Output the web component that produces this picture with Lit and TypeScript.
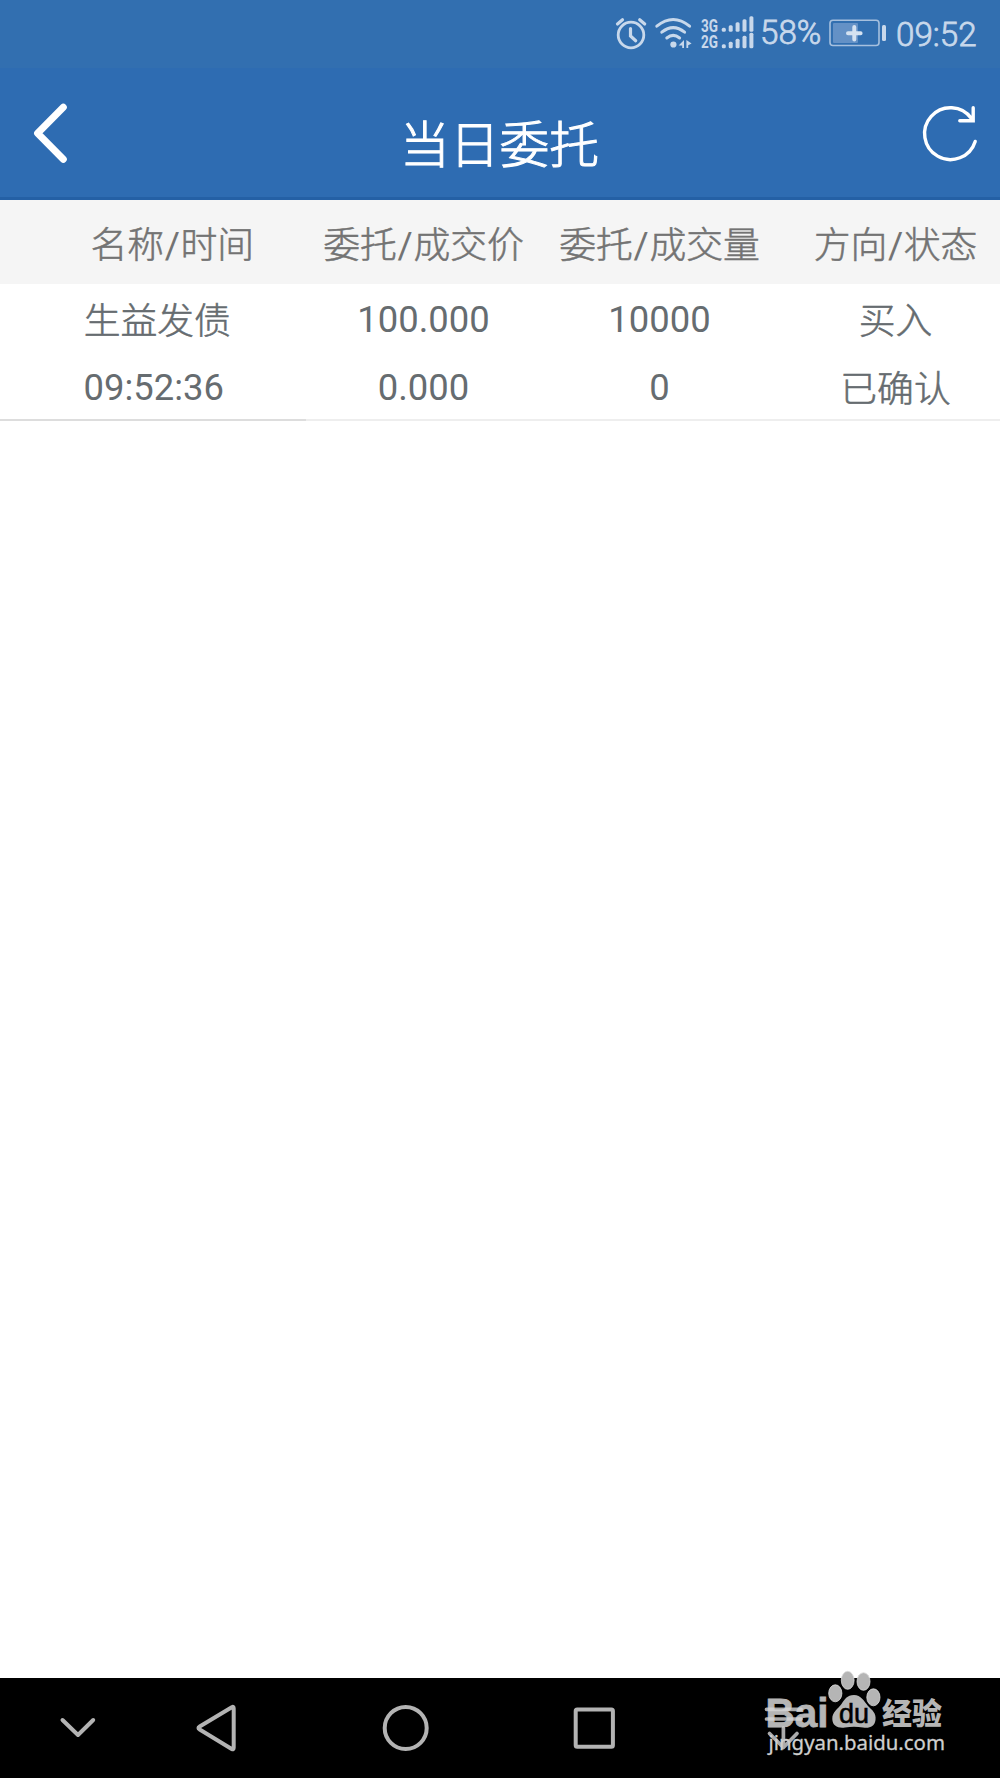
import { LitElement, html, css, svg } from "lit";
import { customElement } from "lit/decorators.js";
import { classMap } from "lit/directives/class-map.js";

const FONT = css`Roboto, "Noto Sans CJK SC", sans-serif`;

@customElement("status-bar")
class StatusBar extends LitElement {
  static styles = css`
    :host {
      display: flex;
      justify-content: flex-end;
      align-items: flex-start;
      height: 68px;
      box-sizing: border-box;
      padding-right: 22px;
      background: #326fb0;
      color: #c8d8eb;
      font-family: ${FONT};
      font-size: 33.2px;
      line-height: 40px;
    }
    svg { display: block; flex: none; }
    .percent { width: 69px; padding-top: 12.5px; white-space: nowrap; }
    .clock { width: 82px; padding: 15px 0 0 1px; white-space: nowrap; }
    .percent, .clock { font-weight: 300; -webkit-text-stroke: 0.8px #c8d8eb; }
    .net { font: bold 18.6px/1 Roboto, sans-serif; }
  `;
  private bars(base: number) {
    return [4, 6.5, 9.5, 12.5, 15.5].map(
      (h, i) => svg`<rect x=${121.8 + i * 6.9} y=${base - h} width="4" height=${h} rx="1.5" fill="#c8d8eb"/>`,
    );
  }
  render() {
    return html`
      <svg width="160" height="68" viewBox="0 0 160 68" fill="none" stroke="#c8d8eb" stroke-width="2.8" stroke-linecap="round">
        <circle cx="31" cy="35" r="12.8"/>
        <path stroke-width="3.2" d="M30.5 28.5v7.5l5.2 4.7M17.5 24l5-4.2M44.7 24l-5-4.2"/>
        <path stroke-width="3" d="M56.8 26.2Q73.2 12.7 89.6 26.2M61.8 32.2Q73.2 23 84.6 32.2M66.8 38Q73.2 32.8 79.6 38"/>
        <circle cx="73.4" cy="44.5" r="3.1" fill="#c8d8eb" stroke="none"/>
        <path d="M84 40v8h-1.8v-2.4h-3.6zM86.4 40l5.2 3.4-3.4 1.8v2.8h-1.8z" fill="#c8d8eb" stroke="none"/>
        <g stroke="none" fill="#c8d8eb">
          <text class="net" x="101" y="31.6" textLength="17" lengthAdjust="spacingAndGlyphs">3G</text>
          <text class="net" x="101" y="48.2" textLength="17" lengthAdjust="spacingAndGlyphs">2G</text>
          ${this.bars(31.7)}${this.bars(48.2)}
        </g>
      </svg>
      <span class="percent">58%</span>
      <svg width="66" height="68" viewBox="0 0 66 68">
        <rect x="1" y="20.3" width="49" height="25.2" rx="3" fill="none" stroke="#a6c0de" stroke-width="1.6"/>
        <rect x="4" y="23" width="25" height="20" rx="1" fill="#6491c6"/>
        <path d="M25.3 27v12.6M19 33.2h12.6" stroke="#d5e2f1" stroke-width="4" stroke-linecap="round" fill="none"/>
        <rect x="53" y="25" width="4" height="16" rx="1.5" fill="#c8d8eb"/>
      </svg>
      <span class="clock">09:52</span>
    `;
  }
}

@customElement("title-bar")
class TitleBar extends LitElement {
  static styles = css`
    :host {
      display: grid;
      grid-template-columns: 120px 1fr 120px;
      height: 132px;
      box-sizing: border-box;
      background: #2e6cb2;
      border-bottom: 3px solid #2460a5;
    }
    svg { display: block; }
    h1 {
      margin: 0;
      padding: 41px 1px 0 0;
      text-align: center;
      font: 300 49.8px/74px ${FONT};
      color: #fff;
      -webkit-text-stroke: 1px #fff;
    }
  `;
  render() {
    return html`
      <svg width="120" height="129" viewBox="0 0 120 129" fill="none" stroke="#fff" stroke-width="7" stroke-linecap="round" stroke-linejoin="round">
        <path d="M63.3 39.2L37.6 65.2L63.3 91.2"/>
      </svg>
      <h1>当日委托</h1>
      <svg width="120" height="129" viewBox="0 0 120 129" fill="none" stroke="#fff" stroke-width="3.4" stroke-linecap="round">
        <path d="M95.2 73.4A25.9 25.9 0 1 1 91.5 50.5M93.2 39.8V52.7H79.8"/>
      </svg>
    `;
  }
}

interface Order { top: string[]; bottom: string[]; }

@customElement("order-table")
class OrderTable extends LitElement {
  static styles = css`
    :host {
      display: block;
      overflow: hidden;
      font: 36.4px/54px ${FONT};
    }
    .line { display: grid; grid-template-columns: 305.5px repeat(3, 236px); text-align: center; white-space: nowrap; }
    .head { height: 84px; background: #f5f5f5; color: #737373; }
    .head span { padding-top: 19px; font-size: 36.8px; font-weight: 300; -webkit-text-stroke: 0.55px #737373; }
    .head span:first-child { padding-left: 39px; }
    .head i { font-style: normal; font-weight: 400; padding: 0 0.7px; -webkit-text-stroke: 0; }
    .body { color: #666c70; }
    .body span:first-child { padding-left: 9px; }
    .top { height: 68px; }
    .top span { padding-top: 9px; }
    .bottom { height: 67px; }
    .bottom span { padding-top: 9px; }
    .bottom span:first-child { padding-left: 2px; }
    .body .han { padding-top: 11px; font-size: 36.8px; font-weight: 300; -webkit-text-stroke: 0.55px #666c70; }
    .rule { display: flex; height: 2px; background: #eeeeee; }
    .rule::before { content: ""; width: 305.5px; background: #dddddd; }
  `;
  private heads = [["名称", "时间"], ["委托", "成交价"], ["委托", "成交量"], ["方向", "状态"]];
  private orders: Order[] = [
    { top: ["生益发债", "100.000", "10000", "买入"], bottom: ["09:52:36", "0.000", "0", "已确认"] },
  ];
  private cell(t: string) {
    return html`<span class=${classMap({ han: !/\d/.test(t) })}>${t}</span>`;
  }
  render() {
    return html`
      <div class="line head">
        ${this.heads.map(([a, b]) => html`<span>${a}<i>/</i>${b}</span>`)}
      </div>
      ${this.orders.map(
        (o) => html`
          <div class="line body top">${o.top.map((t) => this.cell(t))}</div>
          <div class="line body bottom">${o.bottom.map((t) => this.cell(t))}</div>
          <div class="rule"></div>
        `,
      )}
    `;
  }
}

@customElement("nav-bar")
class NavBar extends LitElement {
  static styles = css`
    :host {
      position: relative;
      display: flex;
      align-items: center;
      gap: 128px;
      height: 100px;
      box-sizing: border-box;
      padding-left: 47.5px;
      background: #000;
    }
    svg { display: block; flex: none; }
    .hide { margin-right: -47.5px; }
    .mark { position: absolute; left: 740px; top: -28px; }
    .bai { font: bold 40px "Liberation Sans", sans-serif; }
    .du { font: 28px "Liberation Sans", sans-serif; }
    .exp { font: 900 30px "Noto Sans CJK SC", sans-serif; }
    .url { font: 20.5px "Noto Sans", sans-serif; }
  `;
  private icon(shape: unknown, cls = "") {
    return html`<svg class=${cls} width="60" height="60" viewBox="0 0 60 60" fill="none" stroke="#b3b3b3" stroke-width="4" stroke-linecap="round" stroke-linejoin="round">${shape}</svg>`;
  }
  render() {
    return html`
      ${this.icon(svg`<path d="M14.5 22L30 37L45.2 22"/>`, "hide")}
      ${this.icon(svg`<path d="M43.8 9.3Q45.7 8 45.7 10.5V49.5Q45.7 52 43.7 51L11.7 31.5Q9.2 30 11.7 28.5Z"/>`)}
      ${this.icon(svg`<circle cx="29.7" cy="30" r="21"/>`)}
      ${this.icon(svg`<rect x="11.7" y="11.5" width="37.2" height="37.2" rx="1.5"/>`)}
      <svg class="mark" width="220" height="128" viewBox="0 0 220 128">
        <g fill="#b5b5b5">
          <text class="bai" x="25.5" y="76.5" textLength="63" lengthAdjust="spacingAndGlyphs" stroke="#b5b5b5" stroke-width=".8">Bai</text>
          <g stroke="#dadada" stroke-width=".8">
            <ellipse cx="95.3" cy="43.3" rx="6.6" ry="8.5"/>
            <ellipse cx="107.7" cy="30.3" rx="6.4" ry="9"/>
            <ellipse cx="123.5" cy="31.5" rx="6.5" ry="8.8"/>
            <ellipse cx="133.4" cy="47.3" rx="6.6" ry="8.5"/>
          </g>
          <path d="M114 45C121 45 124 51 128 56C132 60 136.5 63 135.5 70C134.5 77 129 78.5 123 77.5Q114 76 105 77.5C98 78.5 92.5 76 92.3 69C92 62 98 59 101.5 54C104.5 49.5 107 45 114 45Z"/>
          <text class="exp" x="142" y="73.7" textLength="60" lengthAdjust="spacingAndGlyphs">经验</text>
        </g>
        <text class="du" x="99" y="72.5" fill="#000" stroke="#000" stroke-width=".6" textLength="30" lengthAdjust="spacingAndGlyphs">du</text>
        <path d="M26.5 59.3H61M26.5 69H61M43.4 78V96M29.5 83.5L43.4 97.5L57 83.5" fill="none" stroke="#d6d6d6" stroke-opacity=".8" stroke-width="3.7" stroke-linecap="round" stroke-linejoin="round"/>
        <text class="url" x="28.5" y="100" fill="#cfcfcf" stroke="#cfcfcf" stroke-width=".3" textLength="176.5" lengthAdjust="spacingAndGlyphs">jingyan.baidu.com</text>
      </svg>
    `;
  }
}

@customElement("app-root")
class AppRoot extends LitElement {
  static styles = css`
    :host { display: flex; flex-direction: column; width: 1000px; height: 1778px; background: #fff; overflow: hidden; }
    order-table { flex: 1; }
  `;
  render() {
    return html`<status-bar></status-bar><title-bar></title-bar><order-table></order-table><nav-bar></nav-bar>`;
  }
}
